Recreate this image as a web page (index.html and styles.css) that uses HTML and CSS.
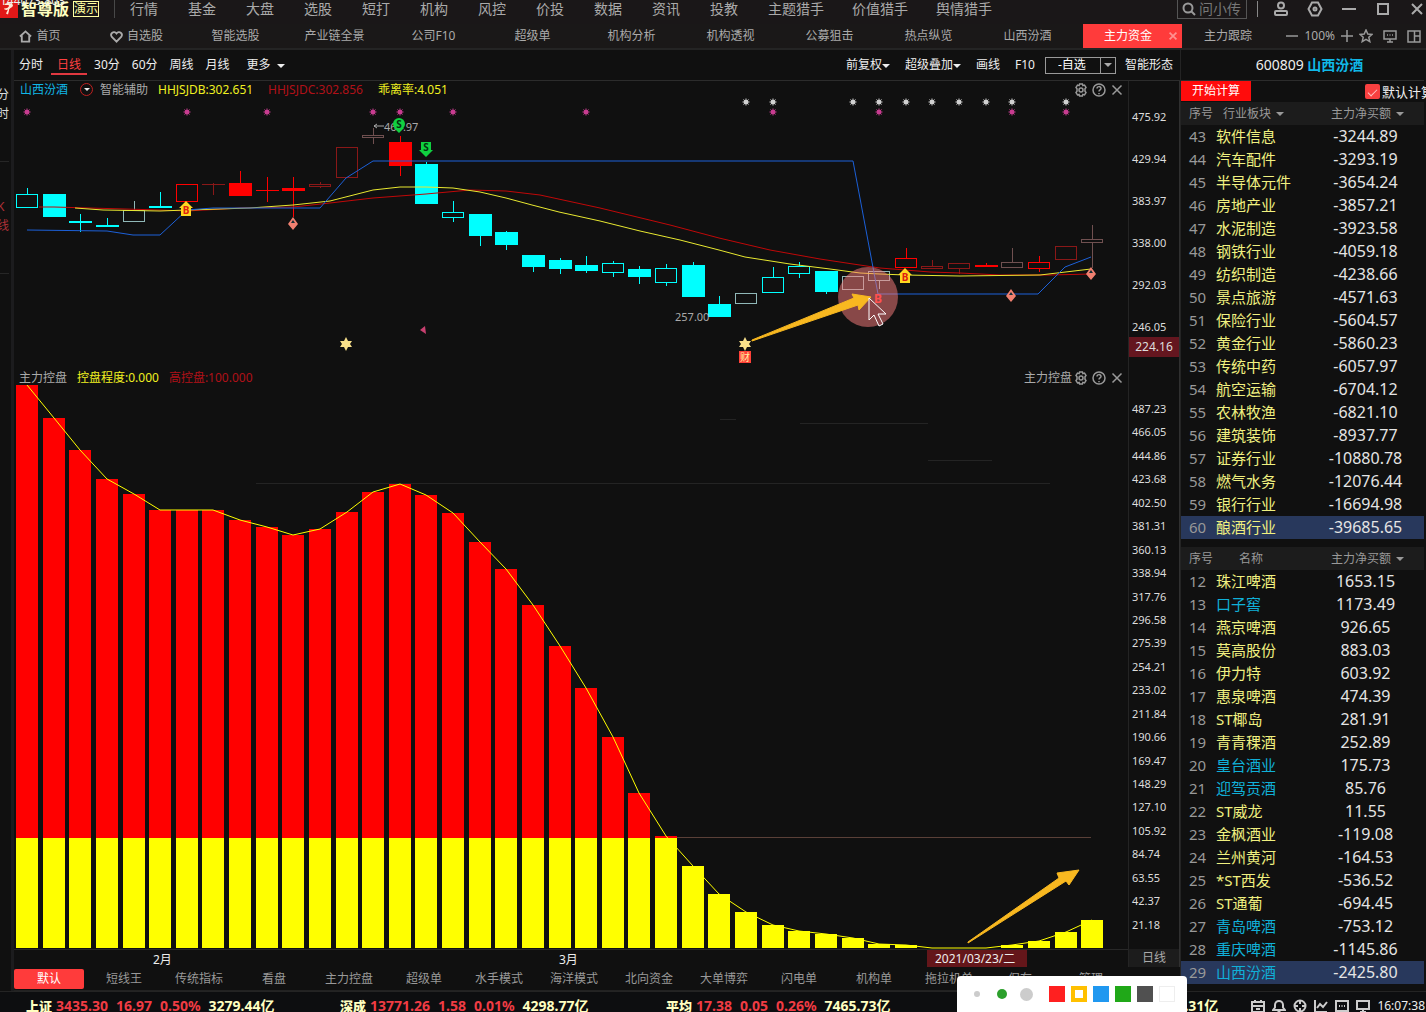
FILE: index.html
```html
<!DOCTYPE html>
<html lang="zh-CN">
<head>
<meta charset="utf-8">
<title>智尊版 - 山西汾酒 主力资金</title>
<link rel="stylesheet" href="styles.css">
</head>
<body>
<svg class="sprite" aria-hidden="true">
  <symbol id="i-gear" viewBox="0 0 14 14"><path d="M5.6 1h2.8l.5 1.6 1.6-.5L12 4.4 11 5.8v2.4l1 1.4-1.5 2.3-1.6-.5-.5 1.6H5.6l-.5-1.6-1.6.5L2 9.6l1-1.4V5.8L2 4.4l1.5-2.3 1.6.5z"/><circle cx="7" cy="7" r="2"/></symbol>
  <symbol id="i-help" viewBox="0 0 14 14"><circle cx="7" cy="7" r="6"/><path d="M5 5.6C5 3 9 3 9 5.4 9 7 7 6.800 7 8.600M7 10v1.200"/></symbol>
  <symbol id="i-close" viewBox="0 0 14 14"><path d="M2.500 2.500l9 9M11.500 2.500l-9 9"/></symbol>
</svg>

<header class="topbar">
  <span class="logo"><svg viewBox="0 0 18 18"><rect width="18" height="18" fill="#e01818"/><path d="M4 4.500c3-2 8-2 9 1-1 3-4 2-4 5l-1 4-2-1 2-4c-2 1-4 0-4-1 3 0 5-1 5-3-1-1-3 0-5-1z" fill="#ffe9d6"/></svg></span>
  <span class="capture">144073.803</span>
  <strong class="brand">智尊版</strong>
  <span class="demo">演示</span>
  <nav class="menu">
    <a href="#">行情</a><a href="#">基金</a><a href="#">大盘</a><a href="#">选股</a><a href="#">短打</a><a href="#">机构</a><a href="#">风控</a><a href="#">价投</a><a href="#">数据</a><a href="#">资讯</a><a href="#">投教</a><span class="hunters"><a href="#">主题猎手</a><a href="#">价值猎手</a><a href="#">舆情猎手</a></span>
  </nav>
  <label class="search"><svg viewBox="0 0 14 14"><circle cx="6" cy="6" r="4.500"/><path d="M9.500 9.500L13 13"/></svg><input type="text" placeholder="问小传" aria-label="问小传"></label>
  <div class="window-tools">
    <button aria-label="用户"><svg viewBox="0 0 16 16"><circle cx="8" cy="4.500" r="3"/><rect x="2" y="10" width="12" height="4" rx="1"/></svg></button>
    <button aria-label="设置"><svg viewBox="0 0 16 16"><path d="M5 1.500h6L14.500 8 11 14.500H5L1.500 8z"/><circle cx="8" cy="8" r="1.500"/></svg></button>
    <button aria-label="最小化"><svg viewBox="0 0 16 16"><path d="M1 8h14"/></svg></button>
    <button aria-label="最大化"><svg viewBox="0 0 16 16"><rect x="3" y="3" width="10" height="10"/></svg></button>
    <button aria-label="关闭"><svg viewBox="0 0 16 16"><path d="M3 3l10 10M13 3L3 13"/></svg></button>
  </div>
</header>

<nav class="tabs">
  <a class="tab tab-home" href="#"><svg viewBox="0 0 14 14"><path d="M1 7l6-5.500L13 7M3 6v6.500h8V6"/></svg>首页</a>
  <a class="tab" href="#"><svg viewBox="0 0 14 14"><path d="M7 12.500L2 7.500C-.5 4 4 0 7 3.800 10 0 14.500 4 12 7.500z"/></svg>自选股</a>
  <a class="tab" href="#">智能选股</a>
  <a class="tab" href="#">产业链全景</a>
  <a class="tab" href="#">公司F10</a>
  <a class="tab" href="#">超级单</a>
  <a class="tab" href="#">机构分析</a>
  <a class="tab" href="#">机构透视</a>
  <a class="tab" href="#">公募狙击</a>
  <a class="tab" href="#">热点纵览</a>
  <a class="tab" href="#">山西汾酒</a>
  <a class="tab tab-active" href="#">主力资金<svg viewBox="0 0 14 14"><path d="M3 3l8 8M11 3l-8 8"/></svg></a>
  <a class="tab" href="#">主力跟踪</a>
  <div class="zoom-tools">
    <button aria-label="缩小"><svg viewBox="0 0 14 14"><path d="M1 7h12"/></svg></button>
    <span>100%</span>
    <button aria-label="放大"><svg viewBox="0 0 14 14"><path d="M1 7h12M7 1v12"/></svg></button>
    <button class="spaced" aria-label="收藏"><svg viewBox="0 0 14 14"><path d="M7 1l1.800 4 4.200.4-3.200 2.900 1 4.300L7 10.300l-3.800 2.300 1-4.300L1 5.400 5.200 5z"/></svg></button>
    <button class="spaced" aria-label="屏幕"><svg viewBox="0 0 14 14"><path d="M1 2h12v8H1zM7 10v3M4 13h6M4 6h1M6.500 6h1M9 6h1"/></svg></button>
    <button class="spaced" aria-label="布局"><svg viewBox="0 0 14 14"><path d="M1 2h12v11H1zM7.500 2v11M7.500 7H13"/></svg></button>
  </div>
</nav>

<div class="workspace">
  <aside class="side">
    <a class="side-item" href="#">分时</a>
    <a class="side-item side-active" href="#">K线</a>
  </aside>

  <main class="main">
    <div class="toolbar">
      <button>分时</button>
      <button class="period-active">日线</button>
      <button>30分</button>
      <button>60分</button>
      <button>周线</button>
      <button>月线</button>
      <button class="more">更多<i class="caret"></i></button>
      <div class="toolbar-right">
        <button>前复权<i class="caret"></i></button>
        <button>超级叠加<i class="caret"></i></button>
        <button>画线</button>
        <button>F10</button>
        <label class="picker"><select aria-label="自选"><option>-自选</option></select><i class="caret"></i></label>
        <button class="shape">智能形态</button>
      </div>
    </div>

    <div class="panes">
      <section class="pane">
        <div class="pane-head">
          <span class="c-cyan">山西汾酒</span>
          <span class="dial"><i class="caret"></i></span>
          <span class="assist">智能辅助</span>
          <span class="c-yellow reading">HHJSJDB:302.651</span>
          <span class="c-red reading">HHJSJDC:302.856</span>
          <span class="c-yellow">乖离率:4.051</span>
          <div class="pane-tools">
            <button aria-label="设置"><svg><use href="#i-gear"/></svg></button>
            <button aria-label="帮助"><svg><use href="#i-help"/></svg></button>
            <button aria-label="关闭"><svg><use href="#i-close"/></svg></button>
          </div>
        </div>
        <svg class="chart" viewBox="14 98 1114 270" role="img" aria-label="K线图">
          <g id="candles"></g>
          <g class="curves">
            <polyline class="l-red" points="39,207 54,207 160,210 187,211 240,208 293,207 330,203 373,198 426,194 470,190 506,191 540,195 600,208 670,225 719,238 770,250 820,259 853,264 880,268 930,272 960,273 1000,275 1050,275 1091,274"/>
            <polyline class="l-yellow" points="75,208 103,210 160,211 187,210 250,208 293,205 330,201 373,190 400,187 426,187 453,188 480,192 506,198 532,205 559,212 600,221 640,231 680,240 719,250 745,257 790,264 830,269 860,273 880,274 905,275 960,276 1040,275 1091,269"/>
            <polyline class="l-blue" points="27,230 107,231 133,235 160,235 187,210 213,208 320,208 346,178 373,161 853,161 878,294 1038,294 1065,267 1091,257"/>
          </g>
          <g id="signals"></g>
          <path d="M384 126h-10m3-2l-3 2 3 2" stroke="#aaa" fill="none"/>
          <text class="price" x="384" y="131">469.97</text>
          <text class="price" x="675" y="321">257.00</text>
          <g class="sell"><circle cx="399" cy="124" r="6"/><path d="M394 128h10l-5 5z"/><text x="399" y="128">S</text></g>
          <g class="sell"><path d="M421 142h10v8h2l-7 7-7-7h2z"/><text x="426" y="151">S</text></g>
          <g class="buy"><path d="M186 201l7 7h-2v8h-10v-8h-2z"/><text x="186" y="214">B</text></g>
          <g class="buy"><path d="M905 268l7 7h-2v8h-10v-8h-2z"/><text x="905" y="281">B</text></g>
          <path d="M293 217l5 7-5 6-5-6zM1011 289l5 7-5 6-5-6zM1091 267l5 7-5 6-5-6z" fill="#f08070"/>
          <path d="M293 220l2 3h-4zM1011 292l2 3h-4zM1091 270l2 3h-4z" fill="#143038"/>
          <path d="M420 330l5-4 1 8z" fill="#c84070"/>
          <g fill="#f8e08a"><path id="star" d="M346 337l2 4h4l-2 3 2 3h-4l-2 4-2-4h-4l2-3-2-3h4z"/><use href="#star" x="399"/></g>
          <rect x="739" y="351" width="12" height="12" fill="#ff4038"/>
          <text class="wealth" x="745" y="361">财</text>
          <text class="hidden-buy" x="878" y="303">B</text>
          <circle cx="868" cy="297" r="30" fill="#ff8080" fill-opacity=".5"/>
          <path d="M752 340L854 298l-2-4 19 3-12 13-1-5-106 36z" fill="#f8b820" stroke="#f8b820"/>
          <path d="M869 298v22l5-5 5 11 4-2-5-10h8z" fill="#8a4548" stroke="#fff"/>
        </svg>
      </section>
      <div class="axis axis-price">
        <span>475.92</span><span>429.94</span><span>383.97</span><span>338.00</span><span>292.03</span><span>246.05</span>
        <b class="axis-mark">224.16</b>
      </div>

      <section class="pane">
        <div class="pane-head pane-head-low">
          <span class="assist">主力控盘</span>
          <span class="c-yellow">控盘程度:0.000</span>
          <span class="c-red">高控盘:100.000</span>
          <div class="pane-tools">
            <span class="assist">主力控盘</span>
            <button aria-label="设置"><svg><use href="#i-gear"/></svg></button>
            <button aria-label="帮助"><svg><use href="#i-help"/></svg></button>
            <button aria-label="关闭"><svg><use href="#i-close"/></svg></button>
          </div>
        </div>
        <svg class="chart" viewBox="14 385 1114 582" role="img" aria-label="主力控盘图">
          <path d="M256 483.500H1050M800 423.500H928M928 460.500H992M720 419.500H736" stroke="#242424"/>
          <path d="M660 837.500H1091" stroke="#5a4038"/>
          <g id="bars"></g>
          <path d="M968 942L1059 878l-2-5 22-3-10 15-3-4-98 62z" fill="#f8b820" stroke="#f8b820"/>
          <path d="M14 949.500H1128M14 967.500H1128" stroke="#282828"/>
          <text class="date" x="153" y="964">2月</text>
          <text class="date" x="559" y="964">3月</text>
          <rect x="927" y="950" width="100" height="17" fill="#64161a"/>
          <text class="date" x="935" y="963">2021/03/23/二</text>
        </svg>
      </section>
      <div class="axis axis-control">
        <div class="scale">
          <span>487.23</span><span>466.05</span><span>444.86</span><span>423.68</span><span>402.50</span><span>381.31</span><span>360.13</span><span>338.94</span><span>317.76</span><span>296.58</span><span>275.39</span><span>254.21</span><span>233.02</span><span>211.84</span><span>190.66</span><span>169.47</span><span>148.29</span><span>127.10</span><span>105.92</span><span>84.74</span><span>63.55</span><span>42.37</span><span>21.18</span>
        </div>
        <b class="axis-period">日线</b>
      </div>
    </div>

    <nav class="schemes">
      <a class="scheme-active" href="#">默认</a><a href="#">短线王</a><a href="#">传统指标</a><a href="#">看盘</a><a href="#">主力控盘</a><a href="#">超级单</a><a href="#">水手模式</a><a href="#">海洋模式</a><a href="#">北向资金</a><a href="#">大单博弈</a><a href="#">闪电单</a><a href="#">机构单</a><a href="#">拖拉机单</a><a href="#">保存</a><a href="#">管理</a>
    </nav>
  </main>

  <aside class="quotes">
    <h1>600809 <b>山西汾酒</b></h1>
    <div class="calc">
      <button>开始计算</button>
      <label><input type="checkbox" checked>默认计算</label>
    </div>
    <table>
      <thead><tr><th>序号</th><th>行业板块<i class="caret"></i></th><th>主力净买额<i class="caret"></i></th></tr></thead>
      <tbody id="sectors"></tbody>
    </table>
    <table class="stocks">
      <thead><tr><th>序号</th><th>名称</th><th>主力净买额<i class="caret"></i></th></tr></thead>
      <tbody id="stocks"></tbody>
    </table>
  </aside>
</div>

<footer class="status">
  <div class="index"><b>上证</b><span>3435.30</span><span>16.97</span><span>0.50%</span><em>3279.44亿</em></div>
  <div class="index"><b>深成</b><span>13771.26</span><span>1.58</span><span>0.01%</span><em>4298.77亿</em></div>
  <div class="index"><b>平均</b><span>17.38</span><span>0.05</span><span>0.26%</span><em>7465.73亿</em></div>
  <div class="index index-last"><em>.31亿</em></div>
  <div class="status-icons">
    <svg viewBox="0 0 14 14"><path d="M1 3h12v10H1zM1 7h12M4 1v3M10 1v3M5 10h4"/></svg>
    <svg viewBox="0 0 14 14"><path d="M1 11h12L11 8.500V6C11 .5 3 .5 3 6v2.500zM5.500 13h3"/></svg>
    <svg viewBox="0 0 14 14"><circle cx="7" cy="7" r="5.500"/><path d="M7 1v4M7 9v4M1 7h4M9 7h4"/></svg>
    <svg viewBox="0 0 14 14"><path d="M1 1v12h12M3 9l3-4 3 3 4-5"/></svg>
    <svg viewBox="0 0 14 14"><path d="M1 2h12v10H1zM4 7h1M6.500 7h1M9 7h1"/></svg>
    <svg viewBox="0 0 14 14"><path d="M1 2h12v8H1zM7 10v3M4 13h6"/></svg>
  </div>
  <time>16:07:38</time>
</footer>

<div class="palette">
  <button class="dot dot-s" aria-label="细"></button>
  <button class="dot dot-m" aria-label="中"></button>
  <button class="dot dot-l" aria-label="粗"></button>
  <button class="ink ink-red" aria-label="红"></button>
  <button class="ink ink-gold" aria-label="黄"></button>
  <button class="ink ink-blue" aria-label="蓝"></button>
  <button class="ink ink-green" aria-label="绿"></button>
  <button class="ink ink-gray" aria-label="灰"></button>
  <button class="ink ink-white" aria-label="白"></button>
</div>
<script src="app.js"></script>
</body>
</html>
```

FILE: styles.css
```css
* { box-sizing: border-box; }
body {
  margin: 0;
  min-height: 100vh;
  display: flex;
  flex-direction: column;
  position: relative;
  overflow-x: hidden;
  background: #101010;
  color: #eee;
  font: 12px/16px "Noto Sans", "Noto Sans CJK SC", sans-serif;
}
a { color: inherit; text-decoration: none; white-space: nowrap; }
button { border: 0; padding: 0; background: none; color: inherit; font: inherit; white-space: nowrap; }
svg { fill: none; }
.sprite { position: absolute; width: 0; height: 0; }
.caret {
  display: inline-block;
  border: 4px solid transparent;
  border-top-color: currentColor;
  border-bottom: 0;
  vertical-align: middle;
}

/* top menu */
.topbar {
  display: flex;
  align-items: center;
  height: 24px;
  padding-bottom: 6px;
  background: #1a1718;
  position: relative;
  overflow: hidden;
}
.logo { width: 18px; height: 18px; }
.logo svg { display: block; }
.capture { position: absolute; left: 0; top: -6px; color: #eee; line-height: 14px; }
.brand { margin-left: 3px; color: #ffffc0; font-size: 16px; line-height: 18px; }
.demo { margin-left: 4px; border: 1px solid #ffffa0; color: #ffffa0; line-height: 14px; }
.menu, .hunters { display: flex; gap: 30px; }
.hunters { gap: 28px; }
.menu {
  margin-left: 15px;
  padding-left: 15px;
  border-left: 1px solid #484848;
  color: #aaa;
  font-size: 14px;
  line-height: 18px;
}
.search {
  display: flex;
  align-items: center;
  width: 70px;
  margin-left: auto;
  padding-left: 4px;
  border: 1px solid #555;
  height: 20px;
}
.search svg { width: 14px; height: 14px; flex: none; stroke: #999; stroke-width: 2; }
.search input { width: 48px; border: 0; padding: 0 0 0 3px; background: none; color: #777; font: inherit; font-size: 14px; }
.search input::placeholder { color: #777; opacity: 1; }
.window-tools { display: flex; gap: 18px; margin-left: 10px; padding: 0 1px 0 15px; border-left: 1px solid #888; stroke: #aaa; stroke-width: 2; }
.window-tools svg { display: block; width: 16px; height: 16px; }

/* page tabs */
.tabs { display: flex; height: 26px; background: #1a1818; border-bottom: 2px solid #242424; color: #aaa; }
.tab { display: flex; align-items: center; justify-content: center; gap: 4px; width: 99px; }
.tab svg { width: 13px; height: 13px; stroke: #aaa; stroke-width: 2; }
.tab-home { width: 87px; padding-right: 7px; }
.tab-active { justify-content: space-between; margin-left: 6px; padding: 0 3px 0 21px; background: #ff3b3b; color: #fff; }
.tab-active svg { width: 12px; height: 12px; stroke: #ff9090; }
.tab-active + .tab { width: 92px; }
.zoom-tools { display: flex; align-items: center; gap: 5px; margin-left: auto; padding-right: 5px; stroke: #999; }
.zoom-tools span { stroke: none; }
.zoom-tools svg { display: block; width: 14px; height: 14px; stroke-width: 1.500; }
.zoom-tools .spaced + .spaced { margin-left: 5px; }

.workspace { display: flex; flex: 1; }
.side { width: 14px; flex: none; border-right: 3px solid #1c1c1e; padding-top: 35px; overflow: hidden; color: #ddd; }
.side-item { display: flex; justify-content: flex-end; width: 12px; height: 76px; margin-left: -3px; line-height: 19px; white-space: normal; overflow-wrap: anywhere; }
.side-item + .side-item { height: 113px; padding-top: 35px; border-top: 1px solid #262626; border-bottom: 1px solid #262626; }
.side-active { color: #b03038; }
.main { flex: 1; min-width: 0; }

/* period toolbar */
.toolbar { display: flex; align-items: center; height: 31px; padding: 0 7px 0 5px; gap: 12px; border-bottom: 1px solid #2c2c2c; line-height: 16px; }
.period-active { margin: 2px -5px 0 -4px; padding: 0 6px; border-bottom: 2px solid #e03840; color: #ff4040; }
.more { margin-left: 5px; }
.more .caret { margin-left: 6px; }
.toolbar-right { display: flex; align-items: center; gap: 15px; margin-left: auto; }
.picker { display: flex; align-items: center; width: 71px; height: 17px; margin-left: -5px; border: 1px solid #999; }
.picker select { appearance: none; flex: 1; min-width: 0; height: 15px; border: 0; border-right: 1px solid #999; border-radius: 0; padding: 0 12px; background: none; color: #fff; font: inherit; line-height: 14px; }
.picker .caret { margin: 0 3px; color: #aaa; }
.picker + .shape { margin-left: -6px; }

/* charts */
.panes { display: grid; grid-template-columns: minmax(0, 1fr) 52px; }
.pane-head { display: flex; align-items: center; gap: 10px; height: 17px; padding: 0 4px 0 6px; white-space: nowrap; }
.pane-head-low { padding: 2px 4px 0 5px; }
.reading { min-width: 100px; }
.pane-tools { display: flex; align-items: center; gap: 4px; margin-left: auto; stroke: #999; stroke-width: 1.500; }
.pane-tools svg { display: block; width: 14px; height: 14px; }
.pane-tools .assist { margin-right: -2px; }
.dial { display: flex; align-items: center; justify-content: center; width: 13px; height: 13px; margin-left: 2px; border: 1px solid #c02020; border-radius: 50%; }
.dial .caret { border-width: 3px 3px 0; }
.dial + .assist { margin-left: -3px; }
.assist { color: #aaa; }
.c-cyan { color: #10b8e8; }
.c-yellow { color: #f0f020; }
.c-red { color: #b01018; }
.chart { display: block; width: 100%; height: auto; overflow: hidden; }
.curves { fill: none; stroke-width: 1; }
.l-red { stroke: #c00808; }
.l-yellow { stroke: #e8e830; }
.l-blue { stroke: #1c60d8; }
.price { fill: #aaa; font-size: 11px; }
.sell { fill: #10d040; }
.buy { fill: #ffd820; }
.sell text { fill: #043010; font-size: 10px; font-weight: bold; text-anchor: middle; }
.buy text { fill: #e02010; font-size: 10px; font-weight: bold; text-anchor: middle; }
.wealth { fill: #fff0a0; font-size: 10px; text-anchor: middle; }
.hidden-buy { fill: #ff2020; font-size: 12px; font-weight: bold; text-anchor: middle; }
.date { fill: #eee; font-size: 12px; }
.axis { position: relative; border-left: 1px solid #242424; border-right: 1px solid #303030; font-size: 11px; color: #ddd; }
.axis span { display: block; padding-left: 3px; }
.axis b { font-weight: normal; font-size: 12px; text-align: center; }
.axis-price { padding-top: 15px; }
.axis-price span { line-height: 42px; }
.axis-mark { position: absolute; left: 0; right: 0; bottom: 11px; line-height: 20px; background: #64161f; }
.axis-control { display: flex; flex-direction: column; padding-top: 29px; }
.scale { display: flex; flex-direction: column; flex: 1; padding-bottom: 13px; }
.scale span { flex: 1; line-height: 23px; }
.axis-period { height: 18px; line-height: 18px; background: #1c1c1c; color: #aaa; }

.schemes { display: grid; grid-template-columns: repeat(12, 75px) 71px 71px 71px; height: 24px; padding-top: 2px; border-bottom: 1px solid #222; color: #999; }
.schemes a { width: 70px; height: 20px; line-height: 20px; text-align: center; }
.schemes .scheme-active { border-radius: 2px; background: #ff3b3b; color: #fff; }

/* money-flow tables */
.quotes { width: 246px; flex: none; padding: 0 2px 0 0; border-left: 1px solid #242424; overflow: hidden; }
.quotes h1 { margin: 0; padding-left: 14px; font-size: 14px; font-weight: normal; line-height: 30px; text-align: center; border-bottom: 1px solid #2c2c2c; }
.quotes h1 b { color: #10b8e8; }
.calc { display: flex; justify-content: space-between; height: 21px; font-size: 13px; white-space: nowrap; }
.calc button { width: 70px; height: 20px; background: #ff0c0c; color: #fff; font-size: 12px; line-height: 18px; }
.calc label { display: flex; align-items: center; gap: 2px; margin-right: -10px; }
.calc input { appearance: none; width: 15px; height: 15px; margin: 0; border-radius: 2px; background: #f84040; display: grid; place-items: center; }
.calc input::after { content: ""; width: 8px; height: 4px; border: solid #ffc0c0; border-width: 0 0 1px 1px; rotate: -45deg; }
.quotes table { width: 100%; table-layout: fixed; border-collapse: collapse; white-space: nowrap; }
.quotes th { height: 23px; padding: 0; background: #1c1c1c; color: #999; font-weight: normal; text-align: left; }
.quotes th:first-child { width: 35px; padding-left: 8px; }
.quotes th:nth-child(2) { width: 91px; padding-left: 7px; }
.quotes th:last-child { padding-left: 24px; }
.quotes th .caret { margin-left: 5px; }
.quotes td { height: 23px; padding: 0 0 1px; line-height: 22px; font-size: 16px; }
.quotes td:first-child { padding-left: 8px; color: #999; font-size: 15px; }
.quotes td:nth-child(2) { color: #f0f080; font-size: 15px; }
.quotes td:last-child { text-align: center; color: #e4e4e4; }
.quotes .held td:nth-child(2) { color: #10b0d8; }
.quotes .picked { background: #28385c; }
.quotes .stocks { margin-top: 8px; }
.quotes .stocks th:nth-child(2) { padding-left: 23px; }

/* status bar */
.status { display: flex; height: 21px; padding: 8px 1px 0 26px; border-top: 1px solid #242424; background: #0d0e10; font-size: 14px; line-height: 12px; white-space: nowrap; overflow: hidden; }
.index { display: flex; gap: 8px; width: 326px; font-weight: bold; color: #f03c44; }
.index:first-child { width: 314px; }
.index b { margin-right: -4px; color: #ffffc0; font-size: 13px; }
.index em { color: #ffffc0; font-style: normal; }
.index.index-last { width: auto; margin-left: auto; }
.status-icons { display: flex; gap: 7px; margin: -1px 7px 0 33px; }
.status-icons svg { width: 14px; height: 14px; stroke: #ccc; stroke-width: 2; }
.status time { font-size: 12px; }

/* floating pen palette */
.palette { position: absolute; right: 239px; bottom: 0; display: flex; align-items: center; gap: 6px; width: 230px; height: 36px; padding: 0 12px 0 17px; border-radius: 4px 4px 0 0; background: #fff; }
.dot { border-radius: 50%; background: #ccc; }
.dot-s { width: 6px; height: 6px; margin-right: 11px; }
.dot-m { width: 10px; height: 10px; margin-right: 7px; background: #2ca02c; }
.dot-l { width: 13px; height: 13px; margin-right: 10px; }
.ink { width: 16px; height: 16px; }
.ink-red { background: #ff2020; }
.ink-gold { border: 4px solid #ffc000; }
.ink-blue { background: #2098f0; }
.ink-green { background: #20a818; }
.ink-gray { background: #505050; }
.ink-white { border: 1px solid #eee; }
```

FILE: app.js
```js
const NS = "http://www.w3.org/2000/svg";
const STEP = 26.63;
const FIRST = 27;
const centre = i => Math.round(FIRST + i * STEP);

function add(parent, name, attrs) {
  const el = document.createElementNS(NS, name);
  for (const key in attrs) el.setAttribute(key, attrs[key]);
  parent.appendChild(el);
  return el;
}

// tone, body top, body bottom, high, low; upper-case tone = filled body
const tones = { c: "#00ffff", r: "#ff0000", d: "#8a1818", g: "#705050", w: "#90b8b8" };
const candles = [
  ["c",194,208,188,208],["C",194,217,194,217],["C",221,223,214,232],["C",225,227,218,227],["w",210,222,201,222],
  ["C",206,208,192,208],["r",184,202,184,202],["D",184,185,183,195],["R",183,196,171,196],["R",190,191,177,202],
  ["R",188,191,177,217],["d",184,187,182,188],["d",147,178,147,178],["g",135,138,128,144],["R",142,166,136,176],
  ["C",164,204,162,204],["c",212,218,201,222],["C",214,236,214,246],["C",232,245,231,250],["C",255,267,255,272],
  ["C",260,269,258,274],["C",265,271,256,273],["c",263,273,261,277],["C",269,277,266,284],["c",268,283,264,286],
  ["C",265,297,262,297],["C",304,317,296,317],["w",293,304,293,304],["c",277,293,267,293],["c",266,274,262,278],
  ["C",271,292,271,294],["w",276,290,276,290],["w",271,281,271,289],["r",258,268,248,268],["d",266,269,260,269],
  ["d",263,269,263,274],["R",265,267,263,267],["g",262,268,248,268],["r",262,269,256,272],["d",246,260,246,260],
  ["g",239,243,225,268]
];
const candleLayer = document.getElementById("candles");
candles.forEach(([tone, top, bottom, high, low], i) => {
  const colour = tones[tone.toLowerCase()];
  const x = centre(i);
  const filled = tone !== tone.toLowerCase();
  add(candleLayer, "path", { d: `M${x + .5} ${high}V${top}M${x + .5} ${bottom}V${low}`, stroke: colour });
  if (filled) add(candleLayer, "rect", { x: x - 11, y: top, width: 23, height: bottom - top, fill: colour });
  else add(candleLayer, "rect", { x: x - 10.5, y: top + .5, width: 21, height: bottom - top - 1, fill: "none", stroke: colour });
});

const signals = document.getElementById("signals");
function mark(i, y, colour) {
  const x = centre(i);
  add(signals, "circle", { cx: x, cy: y, r: 2.5, fill: colour });
  add(signals, "path", { d: `M${x - 4} ${y}h8M${x} ${y - 4}v8M${x - 3} ${y - 3}l6 6M${x + 3} ${y - 3}l-6 6`, stroke: colour, "stroke-opacity": .5 });
}
[0, 6, 9, 13, 14, 16, 21, 28, 32, 37, 39].forEach(i => mark(i, 112, "#c83c90"));
[27, 28, 31, 32, 33, 34, 35, 36, 37, 39].forEach(i => mark(i, 102, "#d0d0d0"));

// control level per day, as the y of each bar's top
const BASE = 948, LIMIT = 838;
const tops = [385,418,450,479,494,510,510,510,520,527,535,529,512,492,484,495,513,542,569,605,646,688,737,793,836,866,894,912,925,931,934,938,944,945,948,948,948,945,941,932,920];
const bars = document.getElementById("bars");
tops.forEach((top, i) => {
  const x = centre(i) - 11;
  if (top < LIMIT) add(bars, "rect", { x, y: top, width: 22, height: LIMIT - top, fill: "#ff0000" });
  const y = Math.max(top, LIMIT);
  add(bars, "rect", { x, y, width: 22, height: BASE - y, fill: "#ffff00" });
});
add(bars, "polyline", { points: tops.map((y, i) => `${centre(i)},${y}`).join(" "), stroke: "#ffff00", fill: "none" });

function fill(id, first, rows, held, picked) {
  document.getElementById(id).innerHTML = rows.map(([name, value], k) => {
    const n = first + k;
    const cls = [held.includes(n) ? "held" : "", n === picked ? "picked" : ""].join(" ").trim();
    return `<tr class="${cls}"><td>${n}</td><td>${name}</td><td>${value}</td></tr>`;
  }).join("");
}
fill("sectors", 43, [
  ["软件信息","-3244.89"],["汽车配件","-3293.19"],["半导体元件","-3654.24"],["房地产业","-3857.21"],["水泥制造","-3923.58"],["钢铁行业","-4059.18"],
  ["纺织制造","-4238.66"],["景点旅游","-4571.63"],["保险行业","-5604.57"],["黄金行业","-5860.23"],["传统中药","-6057.97"],["航空运输","-6704.12"],
  ["农林牧渔","-6821.10"],["建筑装饰","-8937.77"],["证券行业","-10880.78"],["燃气水务","-12076.44"],["银行行业","-16694.98"],["酿酒行业","-39685.65"]
], [], 60);
fill("stocks", 12, [
  ["珠江啤酒","1653.15"],["口子窖","1173.49"],["燕京啤酒","926.65"],["莫高股份","883.03"],["伊力特","603.92"],["惠泉啤酒","474.39"],
  ["ST椰岛","281.91"],["青青稞酒","252.89"],["皇台酒业","175.73"],["迎驾贡酒","85.76"],["ST威龙","11.55"],["金枫酒业","-119.08"],
  ["兰州黄河","-164.53"],["*ST西发","-536.52"],["ST通葡","-694.45"],["青岛啤酒","-753.12"],["重庆啤酒","-1145.86"],["山西汾酒","-2425.80"]
], [13, 20, 21, 27, 28, 29], 29);
```
